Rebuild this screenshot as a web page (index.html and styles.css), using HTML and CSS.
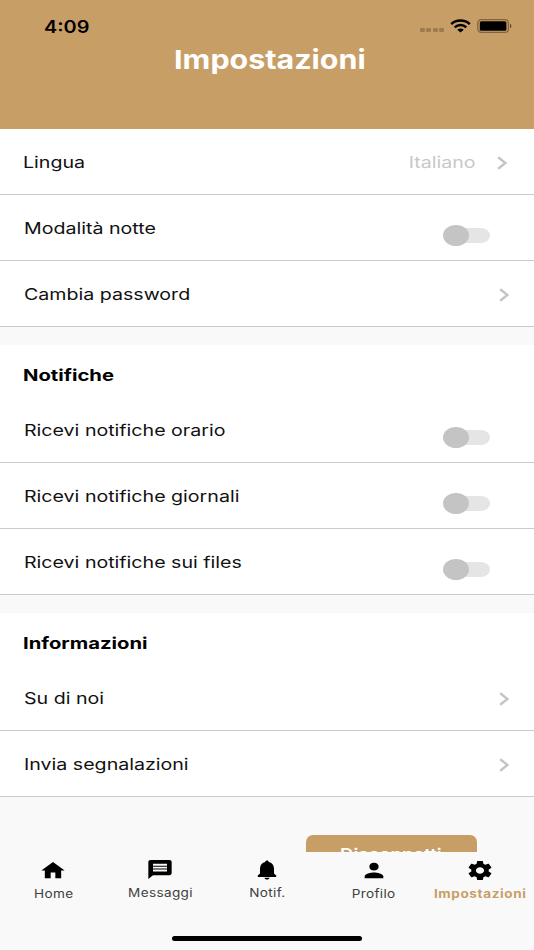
FILE: index.html
```html
<!DOCTYPE html>
<html lang="it">
<head>
<meta charset="utf-8">
<title>Impostazioni</title>
<link rel="stylesheet" href="styles.css">
</head>
<body>
<div class="screen">
  <header class="header">
    <div class="status">
      <span class="clock"><span class="wide">4:09</span></span>
      <div class="indicators">
        <div class="signal"><i></i><i></i><i></i><i></i></div>
        <svg class="wifi" viewBox="0 0 21 14" fill="none" stroke="#000" stroke-width="2.5"><path d="M1.2 5.2C6.2.4 14.8.4 19.8 5.2"/><path d="M4.7 8.3C8 5.3 13 5.3 16.3 8.3"/><path d="M7.2 10.7C9.1 9.1 11.9 9.1 13.8 10.7L10.5 13.5Z" fill="#000" stroke="none"/></svg>
        <svg class="battery" viewBox="0 0 36 14"><rect x=".8" y=".7" width="30.6" height="12.6" rx="3.4" fill="none" stroke="#000" stroke-opacity=".36" stroke-width="1.3"/><rect x="2.8" y="2.2" width="26.6" height="9.6" rx="1.6"/><path d="M33 4.7C34.9 5.3 34.9 8.7 33 9.3Z" fill-opacity=".5"/></svg>
      </div>
    </div>
    <h1 class="title"><span class="wide">Impostazioni</span></h1>
  </header>

  <main class="content">
    <section class="group">
      <div class="row first"><span class="label"><span class="wide">Lingua</span></span><span class="value"><span class="wide">Italiano</span></span><svg class="chevron" viewBox="0 0 10 14"><path d="M1.2 1.2L8.5 7L1.2 12.8"/></svg></div>
      <div class="row"><span class="label"><span class="wide">Modalità notte</span></span><span class="toggle"></span></div>
      <div class="row"><span class="label"><span class="wide">Cambia password</span></span><svg class="chevron" viewBox="0 0 10 14"><path d="M1.2 1.2L8.5 7L1.2 12.8"/></svg></div>
    </section>
    <section class="group">
      <h2 class="heading"><span class="wide">Notifiche</span></h2>
      <div class="row"><span class="label"><span class="wide">Ricevi notifiche orario</span></span><span class="toggle"></span></div>
      <div class="row"><span class="label"><span class="wide">Ricevi notifiche giornali</span></span><span class="toggle"></span></div>
      <div class="row"><span class="label"><span class="wide">Ricevi notifiche sui files</span></span><span class="toggle"></span></div>
    </section>
    <section class="group">
      <h2 class="heading"><span class="wide">Informazioni</span></h2>
      <div class="row"><span class="label"><span class="wide">Su di noi</span></span><svg class="chevron" viewBox="0 0 10 14"><path d="M1.2 1.2L8.5 7L1.2 12.8"/></svg></div>
      <div class="row"><span class="label"><span class="wide">Invia segnalazioni</span></span><svg class="chevron" viewBox="0 0 10 14"><path d="M1.2 1.2L8.5 7L1.2 12.8"/></svg></div>
    </section>
    <button class="logout"><span class="wide">Disconnetti</span></button>
  </main>

  <nav class="tabs">
    <a class="tab"><svg class="icon" viewBox="0 0 24 24" preserveAspectRatio="none"><path d="M10 20v-6h4v6h5v-8h3L12 3 2 12h3v8z"/></svg><span class="wide">Home</span></a>
    <a class="tab raised"><svg class="icon" viewBox="0 0 24 24" preserveAspectRatio="none"><path d="M20 2H4c-1.1 0-2 .9-2 2v18l4-4h14c1.100 0 2-.9 2-2V4c0-1.100-.9-2-2-2zm-2 12H6v-2h12v2zm0-3H6V9h12v2zm0-3H6V6h12v2z"/></svg><span class="wide">Messaggi</span></a>
    <a class="tab raised"><svg class="icon" viewBox="0 0 24 24" preserveAspectRatio="none"><path d="M9.800 20.600h4.400c-.2 1.100-1 1.900-2.200 1.900s-2-.8-2.200-1.900zM18 16.300v-5.300c0-3.300-1.700-6-4.500-6.700V4c0-.9-.67-1.500-1.500-1.500s-1.500.6-1.500 1.500v.3C7.700 5 6 7.700 6 11v5.300l-1.900 2v1.400h15.800v-1.400z"/></svg><span class="wide">Notif.</span></a>
    <a class="tab"><svg class="icon" viewBox="0 0 24 24" preserveAspectRatio="none"><path d="M12 12c2.210 0 4-1.790 4-4s-1.790-4-4-4-4 1.790-4 4 1.790 4 4 4zm0 2c-2.670 0-8 1.340-8 4v2h16v-2c0-2.660-5.330-4-8-4z"/></svg><span class="wide">Profilo</span></a>
    <a class="tab active"><svg class="icon" viewBox="0 0 24 24" preserveAspectRatio="none"><path d="M19.430 12.980c.04-.32.07-.64.07-.98s-.03-.66-.07-.98l2.110-1.650c.19-.15.24-.42.12-.64l-2-3.460c-.12-.22-.39-.3-.61-.22l-2.490 1c-.52-.4-1.080-.73-1.690-.98l-.38-2.650C14.460 2.180 14.250 2 14 2h-4c-.25 0-.46.18-.49.42l-.38 2.650c-.61.25-1.170.59-1.690.98l-2.490-1c-.23-.09-.49 0-.61.22l-2 3.460c-.13.22-.07.49.12.64l2.110 1.650c-.04.32-.07.65-.07.98s.03.66.07.98l-2.110 1.650c-.19.15-.24.42-.12.64l2 3.460c.12.22.39.3.61.22l2.490-1c.52.4 1.080.73 1.690.98l.38 2.650c.03.24.24.42.49.42h4c.25 0 .46-.18.49-.42l.38-2.650c.61-.25 1.170-.59 1.690-.98l2.490 1c.23.09.49 0 .61-.22l2-3.460c.12-.22.07-.49-.12-.64l-2.110-1.650zM12 15.500c-1.930 0-3.500-1.570-3.500-3.500s1.570-3.500 3.500-3.500 3.500 1.570 3.500 3.500-1.570 3.500-3.500 3.500z"/></svg><span class="wide">Impostazioni</span></a>
    <div class="home-bar"></div>
  </nav>
</div>
</body>
</html>
```

FILE: styles.css
```css
* { box-sizing: border-box; }

body {
  margin: 0;
  font-family: Inter, "Liberation Sans", sans-serif;
  color: #111;
  background: #f9f9f9;
}

.screen {
  width: 534px;
  height: 950px;
  display: flex;
  flex-direction: column;
  overflow: hidden;
}

.wide {
  display: inline-block;
  white-space: nowrap;
  transform: scaleX(1.225);
  transform-origin: left center;
}

.header {
  flex: none;
  height: 129.4px;
  background: #c89e67;
}

.status {
  height: 45px;
  padding: 8px 24px 0 44px;
  display: flex;
  justify-content: space-between;
  align-items: center;
}

.clock {
  color: #000;
  font-size: 17px;
  font-weight: 600;
}

.clock .wide { transform: scaleX(1.17); }

.indicators {
  display: flex;
  align-items: center;
  margin-top: -1px;
}

.signal {
  display: flex;
  gap: 1.8px;
  margin: 8px 6px 0 0;
}

.signal i {
  width: 4.7px;
  height: 4px;
  border-radius: 1.3px;
  background: rgba(0, 0, 0, .22);
}

.wifi {
  width: 21px;
  height: 14px;
  margin-right: 6px;
}

.battery {
  width: 36px;
  height: 14px;
  margin-right: -3px;
}

.title {
  margin: 0;
  height: 30px;
  padding-left: 5px;
  line-height: 30px;
  text-align: center;
  color: #fff;
  font-size: 26px;
  font-weight: 700;
}

.title .wide { transform: scaleX(1.17); }

.title .wide,
.tab .wide,
.logout .wide { transform-origin: center; }

.content {
  flex: 1;
  min-height: 0;
  overflow: hidden;
  display: flex;
  flex-direction: column;
}

.group {
  flex: none;
  background: #fff;
  margin-bottom: 18.4px;
}

.row {
  height: 65.8px;
  border-bottom: 1px solid #cbcbcb;
  padding: 0 25px 0 24px;
  display: flex;
  align-items: center;
  font-size: 16px;
}

.row.first { padding: 0 27px 0 23px; }

.label,
.value { padding-top: .5px; }

.label { flex: 1; }

.value {
  color: #c8c8c8;
  margin-right: 21px;
}

.value .wide { transform-origin: right center; }

.chevron {
  width: 10px;
  height: 14px;
  margin-top: 3px;
  fill: none;
  stroke: #c4c4c4;
  stroke-width: 2.4;
}

.toggle {
  position: relative;
  width: 42px;
  height: 15px;
  margin: 16px 19px 0 0;
  border-radius: 9px / 7.5px;
  background: #e5e5e5;
}

.toggle::before {
  content: "";
  position: absolute;
  left: -5px;
  top: -3px;
  width: 26px;
  height: 21px;
  border-radius: 50%;
  background: #c4c4c4;
}

.heading {
  margin: 0;
  height: 52.3px;
  padding: 0 23px;
  line-height: 60px;
  color: #000;
  font-size: 16px;
  font-weight: 700;
}

.heading .wide { transform: scaleX(1.265); }

.logout {
  flex: none;
  align-self: flex-end;
  width: 171.500px;
  height: 38px;
  margin: 19.500px 57px 0 0;
  padding: 0;
  border: 0;
  border-radius: 7px 7px 6px 6px;
  background: #c89e67;
  color: #fff;
  font: 600 16px/36px Inter, "Liberation Sans", sans-serif;
}

.logout .wide {
  transform: scaleX(1.16);
  vertical-align: top;
}

.tabs {
  position: relative;
  flex: none;
  height: 98px;
  display: grid;
  grid-template-columns: repeat(5, 1fr);
  background: #f9f9f9;
}

.tab {
  padding-top: 7px;
  display: flex;
  flex-direction: column;
  align-items: center;
  font-size: 11.500px;
  line-height: 15px;
  color: #404040;
}

.tab .wide {
  transform: scaleX(1.18);
  letter-spacing: .3px;
}

.tab.raised { padding-top: 6px; }

.tab .icon {
  width: 28px;
  height: 23px;
  margin-bottom: 5px;
  fill: #000;
}

.tab.active {
  color: #c89e67;
  font-weight: 700;
}

.tab.active .wide { letter-spacing: .5px; }

.tab.active .icon { transform: translateX(-1px); }

.home-bar {
  position: absolute;
  left: 172px;
  bottom: 9px;
  width: 190px;
  height: 5.500px;
  border-radius: 3px;
  background: #000;
}
```
